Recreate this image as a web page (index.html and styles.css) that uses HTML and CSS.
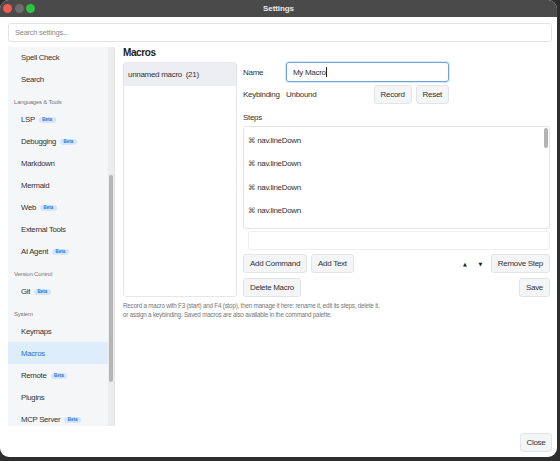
FILE: index.html
```html
<!DOCTYPE html>
<html>
<head>
<meta charset="utf-8">
<link rel="stylesheet" href="styles.css">
</head>
<body>
<div class="window">
  <div class="titlebar">
    <div class="lights">
      <span class="light red"></span>
      <span class="light gray"></span>
      <span class="light green"></span>
    </div>
    <div class="title">Settings</div>
    <div></div>
  </div>
  <div class="search">Search settings...</div>
  <div class="body">
    <div class="sidebar">
      <div class="nav">
        <div class="nav-list">
          <div class="item">Spell Check</div>
          <div class="item">Search</div>
          <div class="group">Languages &amp; Tools</div>
          <div class="item">LSP <span class="beta">Beta</span></div>
          <div class="item">Debugging <span class="beta">Beta</span></div>
          <div class="item">Markdown</div>
          <div class="item">Mermaid</div>
          <div class="item">Web <span class="beta">Beta</span></div>
          <div class="item">External Tools</div>
          <div class="item">AI Agent <span class="beta">Beta</span></div>
          <div class="group">Version Control</div>
          <div class="item">Git <span class="beta">Beta</span></div>
          <div class="group">System</div>
          <div class="item">Keymaps</div>
          <div class="item active">Macros</div>
          <div class="item">Remote <span class="beta">Beta</span></div>
          <div class="item">Plugins</div>
          <div class="item">MCP Server <span class="beta">Beta</span></div>
        </div>
      </div>
      <div class="track"><div class="thumb"></div></div>
    </div>
    <div class="main">
      <div class="heading">Macros</div>
      <div class="editor">
        <div class="macro-list">
          <div class="macro selected">unnamed macro&nbsp; (21)</div>
        </div>
        <div class="form">
          <div class="row name-row">
            <div class="label">Name</div>
            <div class="input focused">My Macro<span class="caret"></span></div>
          </div>
          <div class="row key-row">
            <div class="label">Keybinding</div>
            <div class="value">Unbound</div>
            <div class="spacer"></div>
            <div class="btn">Record</div>
            <div class="btn">Reset</div>
          </div>
          <div class="steps-label">Steps</div>
          <div class="steps">
            <div class="step-list">
              <div class="step"><span class="cmd">⌘</span> nav.lineDown</div>
              <div class="step"><span class="cmd">⌘</span> nav.lineDown</div>
              <div class="step"><span class="cmd">⌘</span> nav.lineDown</div>
              <div class="step"><span class="cmd">⌘</span> nav.lineDown</div>
            </div>
            <div class="steps-track"><div class="steps-thumb"></div></div>
          </div>
          <div class="step-input"></div>
          <div class="row btn-row">
            <div class="btn">Add Command</div>
            <div class="btn">Add Text</div>
            <div class="spacer"></div>
            <div class="arrow">▲</div>
            <div class="arrow">▼</div>
            <div class="btn">Remove Step</div>
          </div>
          <div class="row btn-row second">
            <div class="btn">Delete Macro</div>
            <div class="spacer"></div>
            <div class="btn">Save</div>
          </div>
        </div>
      </div>
      <div class="desc">Record a macro with F3 (start) and F4 (stop), then manage it here: rename it, edit its steps, delete it,<br>or assign a keybinding. Saved macros are also available in the command palette.</div>
    </div>
  </div>
  <div class="footer">
    <div class="btn close">Close</div>
  </div>
</div>
</body>
</html>
```
FILE: styles.css
```css
html, body {
  margin: 0;
  padding: 0;
}
body {
  width: 560px;
  height: 461px;
  overflow: hidden;
  background: #2e2e2e;
  font-family: "Liberation Sans", Arial, sans-serif;
  color: #333;
  font-size: 8px;
  letter-spacing: -0.3px;
}
.window {
  width: 557px;
  height: 457px;
  background: #fff;
  border-radius: 9px;
  overflow: hidden;
  display: flex;
  flex-direction: column;
}
.titlebar {
  height: 17px;
  flex: none;
  background: #4a4a4a;
  display: grid;
  grid-template-columns: 1fr auto 1fr;
  align-items: center;
}
.lights {
  display: flex;
  gap: 2.6px;
  padding-left: 3.2px;
}
.light {
  width: 9px;
  height: 9px;
  border-radius: 50%;
  display: block;
}
.red { background: #ee5a52; }
.gray { background: #6e6e6e; }
.green { background: #2ec341; }
.title {
  color: #ececec;
  font-weight: bold;
  font-size: 8px;
  letter-spacing: -0.1px;
}
.search {
  margin: 6px 5px 0 8px;
  height: 19px;
  box-sizing: border-box;
  border: 1px solid #e2e3e5;
  border-radius: 3px;
  padding-left: 6px;
  display: flex;
  align-items: center;
  color: #8c8c8c;
  font-size: 7.5px;
  letter-spacing: -0.25px;
}
.body {
  margin-top: 5px;
  height: 379px;
  flex: none;
  display: flex;
  padding-left: 8px;
  padding-right: 6px;
}
.sidebar {
  width: 107px;
  flex: none;
  display: flex;
}
.nav {
  width: 101px;
  background: #f5f6f8;
  overflow: hidden;
}
.nav-list {
  margin-top: -1px;
}
.item {
  height: 22px;
  padding-left: 13px;
  display: flex;
  align-items: center;
  font-size: 7.8px;
  letter-spacing: -0.3px;
  color: #333;
}
.item.active {
  background: #ddedfc;
  color: #2d6fc4;
}
.group {
  height: 18px;
  box-sizing: border-box;
  padding: 8px 0 0 6px;
  line-height: 8px;
  font-size: 6px;
  letter-spacing: -0.2px;
  color: #777;
}
.beta {
  display: inline-block;
  margin: 1px 0 0 4px;
  height: 6px;
  line-height: 6px;
  padding: 0 3.5px;
  border-radius: 3px;
  background: #d5e6fa;
  color: #2f74d0;
  font-size: 4.5px;
  font-weight: bold;
  letter-spacing: 0;
}
.track {
  width: 6px;
  background: #ececec;
  border-right: 1px solid #e2e2e2;
}
.thumb {
  margin: 128px 0 0 1px;
  width: 4px;
  height: 207px;
  border-radius: 2px;
  background: #b6b6b6;
}
.main {
  margin-left: 8px;
  flex: 1;
  min-width: 0;
  display: flex;
  flex-direction: column;
  padding-right: 1px;
}
.heading {
  font-size: 10px;
  font-weight: bold;
  letter-spacing: -0.4px;
  line-height: 12px;
  margin-bottom: 3px;
  color: #222;
}
.editor {
  display: flex;
  gap: 6px;
  height: 235px;
}
.macro-list {
  width: 114px;
  flex: none;
  box-sizing: border-box;
  border: 1px solid #e6e7e9;
  border-radius: 3px;
  overflow: hidden;
}
.macro {
  height: 23px;
  padding-left: 4px;
  display: flex;
  align-items: center;
}
.macro.selected {
  background: #eceef1;
}
.form {
  flex: 1;
  min-width: 0;
  display: flex;
  flex-direction: column;
}
.row {
  display: flex;
  align-items: center;
}
.label {
  width: 43px;
  flex: none;
}
.name-row {
  height: 20px;
}
.input {
  width: 163px;
  height: 20px;
  box-sizing: border-box;
  border: 1px solid #6fa3de;
  border-radius: 3px;
  padding-left: 6px;
  display: flex;
  align-items: center;
  box-shadow: 0 0 0 1px rgba(111, 163, 222, 0.25);
}
.caret {
  display: inline-block;
  width: 1px;
  height: 10px;
  background: #222;
  margin-left: 0.5px;
}
.key-row {
  margin-top: 3px;
  height: 19px;
  width: 206px;
}
.spacer {
  flex: 1;
}
.btn {
  height: 19px;
  box-sizing: border-box;
  padding: 0 6px;
  border: 1px solid #e3e4e6;
  border-radius: 3px;
  background: #f4f5f6;
  display: flex;
  align-items: center;
  color: #333;
}
.key-row .btn + .btn,
.btn-row .btn + .btn {
  margin-left: 4px;
}
.steps-label {
  margin: 9px 0 3px;
  line-height: 10px;
}
.steps {
  height: 103px;
  box-sizing: border-box;
  border: 1px solid #e3e4e6;
  border-radius: 3px;
  display: flex;
}
.step-list {
  flex: 1;
  padding-top: 1.5px;
}
.steps-track {
  width: 7px;
  flex: none;
}
.steps-thumb {
  margin: 0.5px 1px 0 1.5px;
  width: 4px;
  height: 20px;
  border-radius: 2px;
  background: #b3b3b3;
}
.step {
  height: 23.5px;
  line-height: 23.5px;
  padding-left: 4px;
  white-space: nowrap;
}
.cmd {
  color: #555;
  font-family: "DejaVu Sans", sans-serif;
  font-size: 7.5px;
}
.step-input {
  margin: 2px 0 0 5px;
  height: 19px;
  box-sizing: border-box;
  border: 1px solid #eeeeef;
  border-radius: 3px;
}
.btn-row {
  margin-top: 4px;
  height: 19px;
}
.btn-row.second {
  margin-top: 5px;
}
.arrow {
  width: 10px;
  text-align: center;
  font-size: 5px;
  color: #222;
  margin-right: 5.5px;
  font-family: "DejaVu Sans", sans-serif;
}
.desc {
  margin-top: 5px;
  font-size: 6.3px;
  line-height: 8.5px;
  letter-spacing: -0.22px;
  color: #777;
}
.footer {
  display: flex;
  justify-content: flex-end;
  padding: 7px 5px 0 0;
}
.close {
  width: 32px;
  justify-content: center;
  padding: 0;
}
```
